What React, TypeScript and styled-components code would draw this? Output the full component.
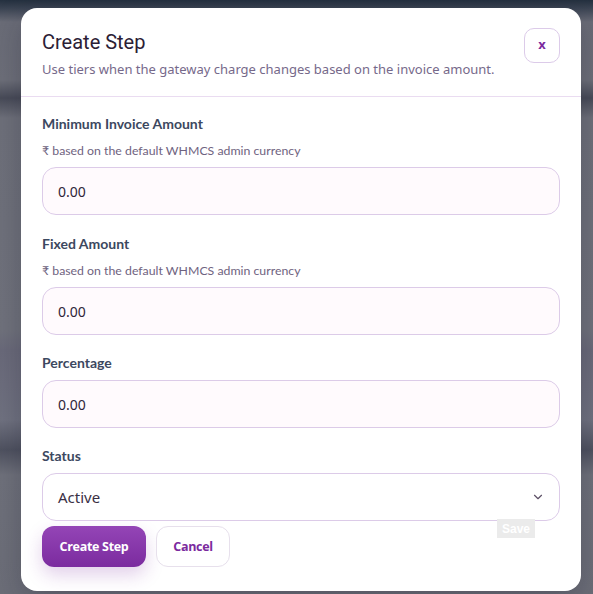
import React from "react";
import styled, { createGlobalStyle } from "styled-components";
import { ChevronDown } from "lucide-react";

const Global = createGlobalStyle`
  html, body { margin: 0; padding: 0; }
  body {
    font-family: Roboto, "Noto Sans", Arial, sans-serif;
    background: linear-gradient(
      to bottom,
      #24303f 0px,
      #3a4352 8px,
      #6a6c77 22px,
      #6d6f79 80px,
      #484b58 98px,
      #6e707a 118px,
      #70727c 330px,
      #6a6a7a 350px,
      #707280 420px,
      #4f5260 450px,
      #6f717b 475px,
      #6c6e78 594px
    );
    min-height: 594px;
  }
  * { box-sizing: border-box; }
`;

const Page = styled.div`
  width: 593px;
  height: 594px;
  padding: 8px 12px 0 21px;
`;

const Modal = styled.div`
  position: relative;
  width: 560px;
  height: 583px;
  background: #ffffff;
  border-radius: 16px;
  box-shadow: 0 10px 30px rgba(20, 20, 40, 0.25);
  display: flex;
  flex-direction: column;
  overflow: hidden;
`;

const Header = styled.div`
  display: flex;
  justify-content: space-between;
  align-items: flex-start;
  padding: 22px 21px 18px 21px;
  border-bottom: 1px solid #eadcf1;
`;

const HeaderText = styled.div`
  display: flex;
  flex-direction: column;
  gap: 6px;
`;

const Title = styled.h2`
  margin: 0;
  font-family: Roboto, "Open Sans", sans-serif;
  font-weight: 400;
  font-size: 20px;
  line-height: 24px;
  color: #2b2035;
`;

const Subtitle = styled.p`
  margin: 0;
  font-family: "Noto Sans", Roboto, sans-serif;
  font-size: 13px;
  line-height: 18px;
  color: #76698a;
`;

const CloseButton = styled.button`
  width: 36px;
  height: 35px;
  margin-top: -2px;
  border-radius: 10px;
  border: 1px solid #dccbe9;
  background: #fff;
  color: #7b2a9e;
  font-family: "Open Sans", Arial, sans-serif;
  font-weight: 700;
  font-size: 13px;
  line-height: 1;
  padding: 0 0 2px 0;
  cursor: pointer;
`;

const Body = styled.div`
  display: flex;
  flex-direction: column;
  gap: 20px;
  padding: 19px 21px 24px 21px;
`;

const Field = styled.div<{ $extra?: number }>`
  display: flex;
  flex-direction: column;
  margin-top: ${(p) => p.$extra ?? 0}px;
`;

const Label = styled.label<{ $helper?: boolean }>`
  font-family: Lato, "Noto Sans", sans-serif;
  font-weight: 700;
  font-size: 14px;
  line-height: 16px;
  color: #3c4860;
  margin-bottom: ${(p) => (p.$helper ? "12px" : "9px")};
`;

const Helper = styled.div`
  font-family: Lato, "Noto Sans", sans-serif;
  font-size: 12.3px;
  line-height: 14px;
  color: #6f6380;
  margin-bottom: 9px;
`;

const Control = styled.div`
  position: relative;
  height: 48px;
  border: 1px solid #dccbe8;
  border-radius: 14px;
  background: #fffafd;
  display: flex;
  align-items: center;
  padding: 0 15px;
`;

const Input = styled.input`
  border: none;
  outline: none;
  background: transparent;
  width: 100%;
  font-family: "Noto Sans", Roboto, sans-serif;
  font-size: 14px;
  color: #2f2539;
  padding: 0;
`;

const SelectBox = styled(Control)`
  background: #ffffff;
  justify-content: space-between;
  padding: 0 14px 0 15px;
`;

const SelectValue = styled.span`
  font-family: "Noto Sans", Roboto, sans-serif;
  font-size: 15px;
  color: #3a2f44;
`;

const Actions = styled.div`
  display: flex;
  gap: 10px;
  margin-top: -15px;
`;

const PrimaryButton = styled.button`
  height: 41px;
  width: 104px;
  padding: 0;
  border: none;
  border-radius: 12px;
  background: linear-gradient(180deg, #9445b6 0%, #7b2b9f 100%);
  color: #fff;
  font-family: "Open Sans", Arial, sans-serif;
  font-weight: 700;
  font-size: 12.5px;
  letter-spacing: -0.3px;
  box-shadow: 0 8px 18px rgba(123, 43, 159, 0.22);
  cursor: pointer;
`;

const SecondaryButton = styled.button`
  height: 41px;
  width: 74px;
  padding: 0;
  border: 1px solid #e7e0ec;
  border-radius: 12px;
  background: #fff;
  color: #7b2a9e;
  font-family: "Open Sans", Arial, sans-serif;
  font-weight: 700;
  font-size: 12.5px;
  letter-spacing: -0.3px;
  cursor: pointer;
`;

const GhostSave = styled.span`
  position: absolute;
  left: 476px;
  top: 511px;
  width: 38px;
  height: 19px;
  background: #ebebeb;
  color: #ffffff;
  font-family: Arial, sans-serif;
  font-weight: 700;
  font-size: 12px;
  display: flex;
  align-items: center;
  justify-content: center;
`;

type FieldDef = { label: string; helper?: string; value: string; extra?: number };

const fields: FieldDef[] = [
  {
    label: "Minimum Invoice Amount",
    helper: "₹ based on the default WHMCS admin currency",
    value: "0.00",
  },
  {
    label: "Fixed Amount",
    helper: "₹ based on the default WHMCS admin currency",
    value: "0.00",
    extra: 1,
  },
  { label: "Percentage", value: "0.00" },
];

export default function App() {
  return (
    <>
      <Global />
      <Page>
        <Modal>
          <Header>
            <HeaderText>
              <Title>Create Step</Title>
              <Subtitle>
                Use tiers when the gateway charge changes based on the invoice amount.
              </Subtitle>
            </HeaderText>
            <CloseButton>x</CloseButton>
          </Header>
          <Body>
            {fields.map((f) => (
              <Field key={f.label} $extra={f.extra}>
                <Label $helper={!!f.helper}>{f.label}</Label>
                {f.helper && <Helper>{f.helper}</Helper>}
                <Control>
                  <Input defaultValue={f.value} />
                </Control>
              </Field>
            ))}
            <Field>
              <Label>Status</Label>
              <SelectBox>
                <SelectValue>Active</SelectValue>
                <ChevronDown size={14} color="#5d5066" strokeWidth={2} />
              </SelectBox>
            </Field>
            <Actions>
              <PrimaryButton>Create Step</PrimaryButton>
              <SecondaryButton>Cancel</SecondaryButton>
            </Actions>
          </Body>
          <GhostSave>Save</GhostSave>
        </Modal>
      </Page>
    </>
  );
}
